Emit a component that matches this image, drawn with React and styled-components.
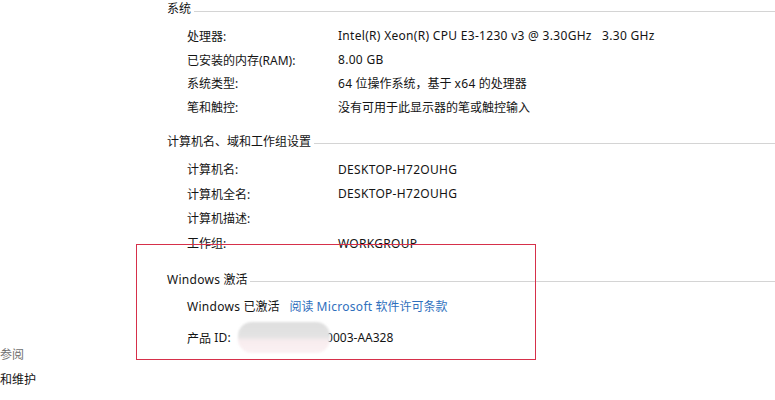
import React from 'react';
import styled, { createGlobalStyle } from 'styled-components';

const GlobalStyle = createGlobalStyle`
  html, body {
    margin: 0;
    padding: 0;
    background: #ffffff;
  }
  body {
    font-family: "Noto Sans", "Noto Sans CJK SC", sans-serif;
    font-size: 12px;
    color: #141414;
    overflow: hidden;
  }
`;

const Page = styled.div`
  width: 775px;
  height: 400px;
  display: flex;
  position: relative;
  overflow: hidden;
`;

const Sidebar = styled.div`
  width: 167px;
  flex-shrink: 0;
  padding-top: 345px;
  display: flex;
  flex-direction: column;
  gap: 6px;
`;

const SideItem = styled.div`
  height: 19px;
  line-height: 19px;
  white-space: nowrap;
  color: ${p => (p.$muted ? '#707070' : '#141414')};
`;

const Main = styled.div`
  flex: 1;
  display: flex;
  flex-direction: column;
`;

const Section = styled.section`
  margin-top: ${p => p.$top}px;
`;

const Heading = styled.div`
  display: flex;
  align-items: center;
  height: 18px;
  line-height: 18px;
  margin-bottom: 6px;
  white-space: nowrap;
`;

const Rule = styled.div`
  flex: 1;
  height: 1px;
  background: #d4d4d4;
  margin-left: 3px;
  margin-top: 4px;
`;

const Row = styled.div`
  display: grid;
  grid-template-columns: 151px auto;
  align-items: center;
  padding-left: 20px;
  height: ${p => p.$h}px;
  white-space: nowrap;
`;

const InlineRow = styled.div`
  display: flex;
  align-items: center;
  padding-left: 20px;
  height: ${p => p.$h}px;
  white-space: nowrap;
`;

// latin runs sit a touch wider in the original (Segoe-ish)
const Latin = styled.span`
  letter-spacing: ${p => p.$ls ?? 0.3}px;
`;

const Link = styled.span`
  color: #2f6fbd;
  margin-left: 10px;
`;

const Smudge = styled.span`
  display: inline-block;
  width: 92px;
  height: 31px;
  margin-left: 7px;
  margin-right: -4px;
  border-radius: 14px;
  background: linear-gradient(#dfdfdf 0%, #e3e3e3 45%, #f8edef 62%, #fbf1f3 100%);
  filter: blur(1px);
  position: relative;
  z-index: 1;
`;

const Mark = styled.div`
  position: absolute;
  left: 136px;
  top: 244px;
  width: 398px;
  height: 114px;
  border: 1px solid #d6304a;
  pointer-events: none;
`;

const systemRows = [
  ['处理器:', <Latin>Intel(R) Xeon(R) CPU E3-1230 v3 @ 3.30GHz{'\u00a0\u00a0\u00a0'}3.30 GHz</Latin>],
  ['已安装的内存(RAM):', <Latin>8.00 GB</Latin>],
  ['系统类型:', <span><Latin>64</Latin> 位操作系统，基于 <Latin>x64</Latin> 的处理器</span>],
  ['笔和触控:', <span>没有可用于此显示器的笔或触控输入</span>],
];

const nameRows = [
  ['计算机名:', 'DESKTOP-H72OUHG'],
  ['计算机全名:', 'DESKTOP-H72OUHG'],
  ['计算机描述:', ''],
  ['工作组:', 'WORKGROUP'],
];

export default function App() {
  return (
    <>
      <GlobalStyle />
      <Page>
        <Sidebar>
          <SideItem $muted>参阅</SideItem>
          <SideItem>和维护</SideItem>
        </Sidebar>
        <Main>
          <Section $top={0}>
            <Heading>系统<Rule /></Heading>
            {systemRows.map(([k, v]) => (
              <Row key={k} $h={23.7}><span>{k}</span>{v}</Row>
            ))}
          </Section>
          <Section $top={14}>
            <Heading>计算机名、域和工作组设置<Rule /></Heading>
            {nameRows.map(([k, v]) => (
              <Row key={k} $h={24.7}><span>{k}</span><Latin>{v}</Latin></Row>
            ))}
          </Section>
          <Section $top={15}>
            <Heading><Latin>Windows</Latin>&nbsp;激活<Rule /></Heading>
            <InlineRow $h={23}>
              <Latin>Windows</Latin>&nbsp;已激活
              <Link>阅读 <Latin>Microsoft</Latin> 软件许可条款</Link>
            </InlineRow>
            <InlineRow $h={40}>
              产品&nbsp;<Latin>ID:</Latin><Smudge /><Latin $ls={0}>0003-AA328</Latin>
            </InlineRow>
          </Section>
        </Main>
        <Mark />
      </Page>
    </>
  );
}
